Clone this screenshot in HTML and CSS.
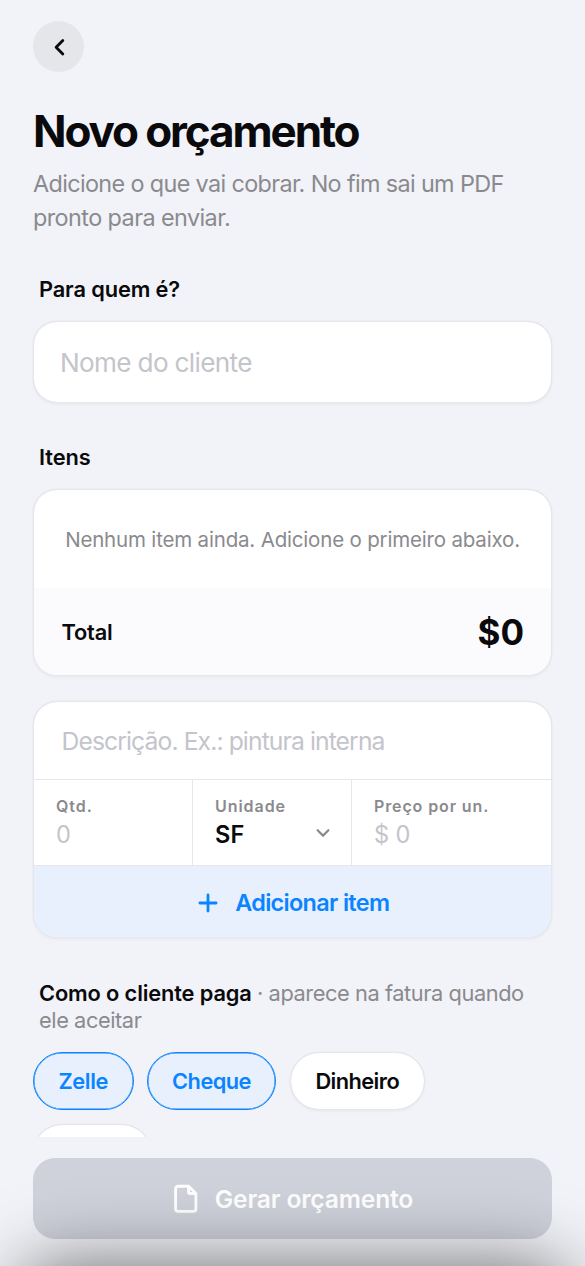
FILE: index.html
```html
<!DOCTYPE html>
<html lang="pt">
<head>
<meta charset="utf-8">
<meta name="viewport" content="width=device-width, initial-scale=1">
<title>Novo orçamento</title>
<link rel="stylesheet" href="styles.css">
</head>
<body>
<div class="screen">
  <main class="content">
    <button class="back" aria-label="Voltar">
      <svg width="12" height="20" viewBox="0 0 12 20"><path d="M9.8 3.4 3.1 10.2l6.7 6.8"/></svg>
    </button>
    <h1 class="title">Novo orçamento</h1>
    <p class="subtitle"><span class="subtitle-lead">Adicione o que vai cobrar. No fim sai um PDF</span> pronto para enviar.</p>

    <h2 class="label label-client">Para quem é?</h2>
    <div class="card client">Nome do cliente</div>

    <h2 class="label label-items">Itens</h2>
    <section class="card items">
      <p class="empty">Nenhum item ainda. Adicione o primeiro abaixo.</p>
      <div class="total"><span class="total-name">Total</span><span class="total-value">$0</span></div>
    </section>

    <section class="card editor">
      <div class="description">Descrição. Ex.: pintura interna</div>
      <div class="fields">
        <div class="field"><span class="field-name">Qtd.</span><span class="field-hint">0</span></div>
        <div class="field">
          <span class="field-name">Unidade</span><span class="field-value">SF</span>
          <svg class="chevron" width="16" height="10" viewBox="0 0 16 10"><path d="m2.6 2.2 5.4 5.4 5.4-5.4"/></svg>
        </div>
        <div class="field"><span class="field-name field-name-price">Preço por un.</span><span class="field-hint">$ 0</span></div>
      </div>
      <button class="add">
        <svg width="20" height="20" viewBox="0 0 20 20"><path d="M10 1.9v16.2M1.9 10h16.2"/></svg>
        <span>Adicionar item</span>
      </button>
    </section>

    <h2 class="label label-pay">Como o cliente paga <span class="pay-note">· aparece na fatura quando ele aceitar</span></h2>
    <div class="chips">
      <button class="chip chip-on chip-zelle">Zelle</button>
      <button class="chip chip-on chip-check">Cheque</button>
      <button class="chip chip-cash">Dinheiro</button>
      <button class="chip chip-more" aria-label="Outro"></button>
    </div>
  </main>
  <footer class="footer">
    <button class="submit">
      <svg width="26" height="30" viewBox="0 0 26 30"><path d="M5.2 2.2h10.4l7.3 7.3v15.3a2.6 2.6 0 0 1-2.6 2.6H5.2a2.6 2.6 0 0 1-2.6-2.6v-20a2.6 2.6 0 0 1 2.6-2.6zM15.6 2.4v5.9a1.2 1.2 0 0 0 1.2 1.2h5.9"/></svg>
      <span>Gerar orçamento</span>
    </button>
  </footer>
  <div class="shade"></div>
</div>
</body>
</html>
```
FILE: styles.css
```css
* { box-sizing: border-box; }

body, h1, h2, p { margin: 0; }

body {
  background: #f2f3f8;
  color: #0a0a0c;
  font-family: Inter, "Liberation Sans", sans-serif;
}

button {
  margin: 0;
  padding: 0;
  border: 0;
  font: inherit;
  color: inherit;
}

svg {
  display: block;
  flex: none;
  fill: none;
  stroke: currentColor;
  stroke-linecap: round;
  stroke-linejoin: round;
}

.screen {
  position: relative;
  height: 1266px;
  overflow: hidden;
}

.content {
  height: 1137px;
  overflow: hidden;
  padding: 21px 33px 0;
}

.back {
  display: flex;
  align-items: center;
  justify-content: center;
  width: 51px;
  height: 51px;
  border-radius: 50%;
  background: #e5e6ea;
  stroke-width: 2.8;
}

.title {
  margin-top: 32px;
  font-size: 44px;
  font-weight: 700;
  line-height: 54px;
  letter-spacing: -2.1px;
}

.subtitle {
  margin-top: 9px;
  color: #8a8a8e;
  font-size: 23.4px;
  line-height: 34px;
  letter-spacing: -.57px;
}

.subtitle-lead {
  display: block;
  letter-spacing: -.64px;
}

.label {
  padding-left: 6px;
  font-size: 21.8px;
  font-weight: 600;
  line-height: 27px;
  letter-spacing: -.13px;
}

.label-client { margin-top: 41px; }
.label-items { margin-top: 41px; letter-spacing: -.1px; }
.label-pay { margin-top: 42px; }
.pay-note { color: #8a8a8e; font-weight: 400; letter-spacing: -.43px; }

.card {
  overflow: hidden;
  border: 1px solid #e6e6ec;
  border-radius: 24px;
  background: #fff;
  background-clip: padding-box;
  box-shadow: 0 0 0 .5px #e9e9ef, 0 1.5px 3px rgba(0, 0, 0, .04);
}

.client {
  display: flex;
  align-items: center;
  height: 82px;
  margin-top: 18px;
  padding-left: 26px;
  color: #c4c4cb;
  font-size: 26.2px;
  letter-spacing: -.69px;
}

.items { height: 187px; margin-top: 18px; }

.empty {
  height: 98px;
  color: #8a8a8e;
  font-size: 20.5px;
  line-height: 100px;
  text-align: center;
  letter-spacing: -.18px;
  white-space: nowrap;
}

.total {
  display: flex;
  align-items: center;
  justify-content: space-between;
  height: 87px;
  padding: 1px 27px 0 27.5px;
  background: #fbfbfd;
}

.total-name { font-size: 21.8px; font-weight: 600; letter-spacing: -.2px; }
.total-value { font-size: 35px; font-weight: 700; }

.editor { height: 237px; margin-top: 25px; }

.description {
  height: 78px;
  padding-left: 27.5px;
  border-bottom: 1px solid #e6e6ec;
  color: #c4c4cb;
  font-size: 24.7px;
  line-height: 78px;
  letter-spacing: -.9px;
}

.fields {
  display: grid;
  grid-template-columns: 159px 159px 1fr;
  height: 86px;
  border-bottom: 1.5px solid #e6e6ec;
}

.field {
  position: relative;
  display: flex;
  flex-direction: column;
  padding: 16px 0 0 22px;
  border-right: 1.5px solid #e6e6ec;
}

.field:last-child { border-right: 0; }

.field-name {
  color: #8a8a8e;
  font-size: 16px;
  font-weight: 600;
  line-height: 20px;
  letter-spacing: .95px;
}

.field-name-price { letter-spacing: .88px; }

.field-hint, .field-value {
  margin-top: 4px;
  font-size: 23.6px;
  line-height: 30px;
}

.field-hint { color: #c4c4cb; letter-spacing: -.1px; }
.field-value { font-weight: 600; letter-spacing: .2px; }

.chevron {
  position: absolute;
  right: 20.5px;
  top: 48px;
  color: #8a8a8e;
  stroke-width: 2.2;
}

.add {
  display: flex;
  align-items: center;
  justify-content: center;
  gap: 17px;
  width: 100%;
  height: 72px;
  padding: 1px 0 0 2.5px;
  background: #e8f0fe;
  color: #0a84ff;
  font-size: 23.4px;
  font-weight: 600;
  letter-spacing: -.66px;
  stroke-width: 2.8;
}

.chips {
  display: flex;
  flex-wrap: wrap;
  gap: 14px 13.5px;
  margin-top: 18px;
}

.chip {
  height: 58px;
  border: 1px solid #e6e6ec;
  border-radius: 30px;
  background: #fff;
  background-clip: padding-box;
  box-shadow: 0 0 0 .5px #e9e9ef, 0 1.5px 3px rgba(0, 0, 0, .04);
  font-size: 21.8px;
  font-weight: 600;
  letter-spacing: -.56px;
}

.chip-on {
  border-color: #0a84ff;
  background: #e8f0fe;
  box-shadow: inset 0 0 0 .5px #0a84ff;
  color: #0a84ff;
}

.chip-zelle { width: 100.5px; letter-spacing: -.38px; }
.chip-check { width: 129px; }
.chip-cash { width: 135.5px; }
.chip-more { width: 118px; }

.footer { padding: 21px 33px 0; }

.submit {
  display: flex;
  align-items: center;
  justify-content: center;
  gap: 16px;
  width: 100%;
  height: 81px;
  padding-left: 1px;
  border-radius: 22px;
  background: #cfd1db;
  color: #fff;
  font-size: 24.7px;
  font-weight: 600;
  letter-spacing: -.2px;
  stroke-width: 2.9;
}

.shade {
  position: absolute;
  top: 1267px;
  left: 22px;
  right: 18px;
  height: 200px;
  border-radius: 30px;
  box-shadow: 0 0 76px rgba(0, 0, 0, .58);
}
```
